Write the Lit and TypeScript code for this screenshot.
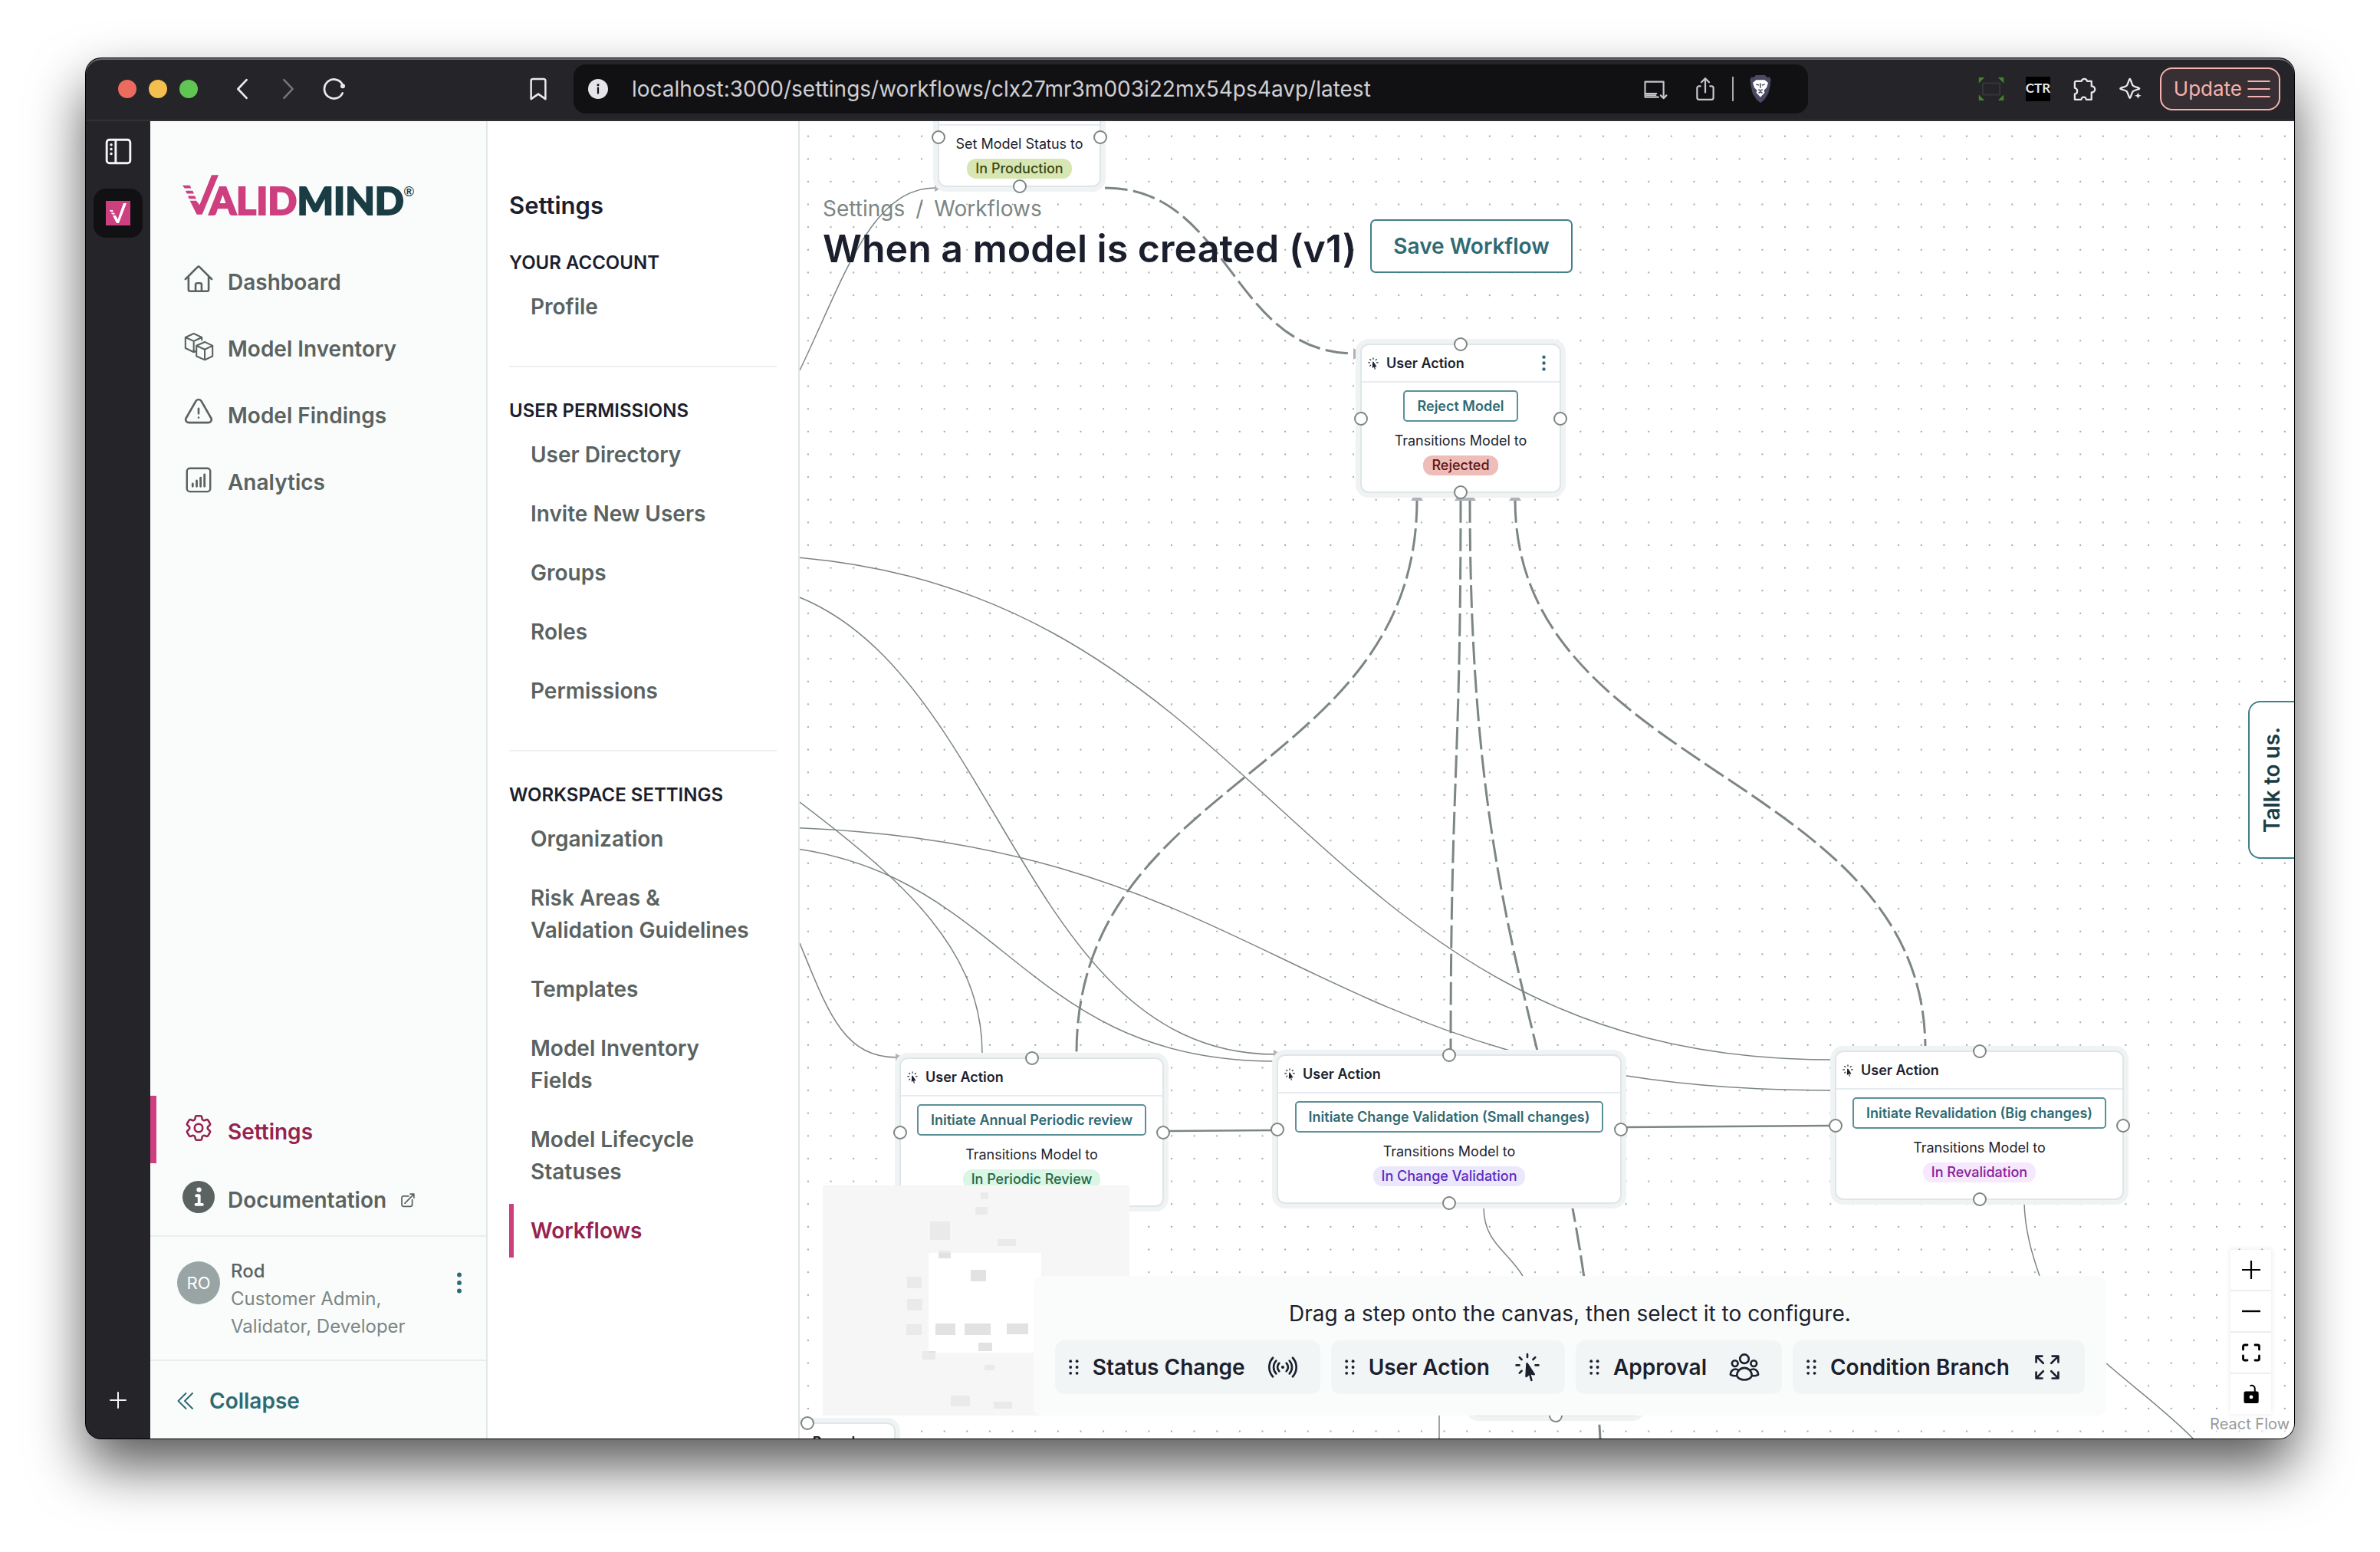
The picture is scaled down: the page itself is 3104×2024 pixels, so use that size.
import { LitElement, html, css, svg, nothing } from "lit";
import { customElement } from "lit/decorators.js";
import { classMap } from "lit/directives/class-map.js";
import { styleMap } from "lit/directives/style-map.js";

interface NavItem { label: string; icon?: unknown; active?: boolean; external?: boolean; }
interface Section { title: string; items: NavItem[]; }
interface FlowNode {
  x: number; y: number; width: number; height?: number;
  title?: string; menu?: boolean; action?: string; caption?: string; status?: string; tone?: string;
  handles: string[];
}

const outline = (d: string) => svg`<path d=${d} fill="none" stroke="currentColor" stroke-width="1.5" stroke-linecap="round" stroke-linejoin="round"></path>`;
const icon = (content: unknown, size = "md") => html`<svg class="icon ${size}" viewBox="0 0 24 24" aria-hidden="true">${content}</svg>`;

const HOME = outline("m2.25 12 8.954-8.955c.44-.439 1.152-.439 1.591 0L21.75 12M4.5 9.75v10.125c0 .621.504 1.125 1.125 1.125H9.75v-4.875c0-.621.504-1.125 1.125-1.125h2.25c.621 0 1.125.504 1.125 1.125V21h4.125c.621 0 1.125-.504 1.125-1.125V9.75M8.25 21h8.25");
const CUBES = svg`<path fill="none" stroke="currentColor" stroke-width="1.2" stroke-linejoin="round" d="M2.200 5.700 8.400 2.900 14.400 5.700 8.400 8.500 2.200 5.700V13.700L8.400 16.700 10 15.900M8.400 8.500V16.700M14.400 5.700V8.100M10.400 11.900 16.600 9.100 22.400 11.900 16.600 14.700 10.400 11.900V19.700L16.600 22.500 22.400 19.700V11.900M16.600 14.700V22.500"></path>`;
const WARNING = outline("M12 9v3.75m-9.303 3.376c-.866 1.5.217 3.374 1.948 3.374h14.71c1.73 0 2.813-1.874 1.948-3.374L13.949 3.378c-.866-1.5-3.032-1.5-3.898 0L2.697 16.126ZM12 15.75h.007v.008H12v-.008Z");
const CHART = svg`<rect x="3.3" y="3.8" width="17.4" height="17.4" rx="2.2" fill="none" stroke="currentColor" stroke-width="1.4"></rect><path fill="none" stroke="currentColor" stroke-width="1.6" stroke-linecap="round" d="M7.6 17.3v-2M10.6 17.3v-4.2M13.5 17.3v-6.4M16.4 17.3V8.5"></path>`;
const GEAR = outline("M9.594 3.94c.09-.542.56-.94 1.11-.94h2.593c.55 0 1.02.398 1.11.94l.213 1.281c.063.374.313.686.645.87.074.04.147.083.22.127.325.196.72.257 1.075.124l1.217-.456a1.125 1.125 0 0 1 1.37.49l1.296 2.247a1.125 1.125 0 0 1-.26 1.431l-1.003.827c-.293.241-.438.613-.43.992a7.723 7.723 0 0 1 0 .255c-.008.378.137.75.43.991l1.004.827c.424.35.534.955.26 1.43l-1.298 2.247a1.125 1.125 0 0 1-1.369.491l-1.217-.456c-.355-.133-.75-.072-1.076.124a6.47 6.47 0 0 1-.22.128c-.331.183-.581.495-.644.869l-.213 1.281c-.09.543-.56.94-1.11.94h-2.594c-.55 0-1.019-.398-1.11-.94l-.213-1.281c-.062-.374-.312-.686-.644-.87a6.52 6.52 0 0 1-.22-.127c-.325-.196-.72-.257-1.076-.124l-1.217.456a1.125 1.125 0 0 1-1.369-.49l-1.297-2.247a1.125 1.125 0 0 1 .26-1.431l1.004-.827c.292-.24.437-.613.43-.991a6.932 6.932 0 0 1 0-.255c.007-.38-.138-.751-.43-.992l-1.004-.827a1.125 1.125 0 0 1-.26-1.43l1.297-2.247a1.125 1.125 0 0 1 1.37-.491l1.216.456c.356.133.751.072 1.076-.124.072-.044.146-.086.22-.128.332-.183.582-.495.644-.869l.214-1.28ZM15 12a3 3 0 1 1-6 0 3 3 0 0 1 6 0Z");
const INFO = svg`<circle cx="12" cy="12" r="12" fill="currentColor"></circle><circle cx="12.3" cy="6.6" r="1.8" fill="#fff"></circle><path fill="none" stroke="#fff" stroke-width="2.2" stroke-linecap="round" stroke-linejoin="round" d="M10.4 11h2v6.6M10 17.6h4.8"></path>`;
const EXTERNAL = svg`<path fill="none" stroke="currentColor" stroke-width="2" stroke-linecap="round" stroke-linejoin="round" d="M13.5 5.5H6A2.5 2.5 0 0 0 3.500 8v10.500A2.500 2.500 0 0 0 6 21h10.500a2.500 2.500 0 0 0 2.500-2.500V11M8 16.500 21.500 2.500M16 2.500h5.500V8"></path>`;
const CHEVRONS = svg`<path fill="none" stroke="currentColor" stroke-width="2" stroke-linecap="round" stroke-linejoin="round" d="M12.500 2 2.500 12l10 10M21 2 11 12l10 10"></path>`;
const KEBAB = svg`<g fill="currentColor"><circle cx="12" cy="3" r="2.500"></circle><circle cx="12" cy="12" r="2.500"></circle><circle cx="12" cy="21" r="2.500"></circle></g>`;
const CURSOR = svg`<path fill="currentColor" d="m13.700 16.600-2.510 2.225.569-9.470 5.227 7.917z"></path><path fill="none" stroke="currentColor" stroke-width="1.500" stroke-linecap="round" stroke-linejoin="round" d="M15.042 21.672 13.684 16.600m0 0-2.510 2.225.569-9.470 5.227 7.917-3.286-.672ZM12 2.250V4.500m5.834.166-1.591 1.591M20.250 10.500H18M7.757 14.743l-1.590 1.590M6 10.500H3.750m4.007-4.243-1.590-1.590"></path>`;
const SIGNAL = svg`<circle cx="12" cy="12" r="1.200" fill="currentColor"></circle><path fill="none" stroke="currentColor" stroke-width="1.500" stroke-linecap="round" d="M9.300 9a4.200 4.200 0 0 0 0 6M14.700 9a4.200 4.200 0 0 1 0 6M7 7.200a7.200 7.200 0 0 0 0 9.600M17 7.200a7.200 7.200 0 0 1 0 9.600M4.600 5a10.400 10.400 0 0 0 0 14M19.400 5a10.400 10.400 0 0 1 0 14"></path>`;
const PEOPLE = svg`<g fill="none" stroke="currentColor" stroke-width="1.500" stroke-linejoin="round" stroke-linecap="round"><circle cx="12" cy="5.800" r="3.300"></circle><circle cx="5" cy="9.200" r="2.200"></circle><circle cx="19" cy="9.200" r="2.200"></circle><path d="M6.400 18.500a5.600 6 0 0 1 11.200 0c-1.200 2.200-3.200 2.900-5.600 2.900s-4.400-.7-5.600-2.900zM6.300 18.300c-1.700.3-3.200 0-4.600-.7-.2-2 1.400-4.200 3.500-4.200 1 0 1.700.2 2.300.7M17.700 18.300c1.700.3 3.200 0 4.600-.7.200-2-1.400-4.200-3.500-4.200-1 0-1.700.2-2.300.7"></path></g>`;
const BRANCH = outline("M3.750 3.750v4.500m0-4.500h4.500m-4.500 0L9 9M3.750 20.250v-4.500m0 4.500h4.500m-4.500 0L9 15M20.250 3.750h-4.500m4.500 0v4.500m0-4.500L15 9m5.250 11.250h-4.500m4.500 0v-4.500m0 4.500L15 15");
const GRIP = svg`<g fill="currentColor"><circle cx="7.200" cy="4.200" r="1.900"></circle><circle cx="15.600" cy="4.200" r="1.900"></circle><circle cx="7.200" cy="12" r="1.900"></circle><circle cx="15.600" cy="12" r="1.900"></circle><circle cx="7.200" cy="19.800" r="1.900"></circle><circle cx="15.600" cy="19.800" r="1.900"></circle></g>`;

const BACK = svg`<path fill="none" stroke="currentColor" stroke-width="2.200" stroke-linecap="round" stroke-linejoin="round" d="M16.500 2.500 7.500 12l9 9.500"></path>`;
const FORWARD = svg`<path fill="none" stroke="currentColor" stroke-width="2" stroke-linecap="round" stroke-linejoin="round" d="M7.500 2.500l9 9.500-9 9.500"></path>`;
const RELOAD = svg`<path fill="none" stroke="currentColor" stroke-width="2.200" stroke-linecap="round" d="M20.600 16.400A10 10 0 1 1 20.600 7.600"></path><circle cx="20.800" cy="9" r="2.400" fill="currentColor"></circle>`;
const BOOKMARK = svg`<path fill="none" stroke="currentColor" stroke-width="2" stroke-linejoin="round" d="M4.500 3.500a2 2 0 0 1 2-2h11a2 2 0 0 1 2 2V22.500L12 17.300 4.500 22.500z"></path>`;
const SITE_INFO = svg`<circle cx="12" cy="12" r="13" fill="#e4e4e9"></circle><circle cx="12" cy="6.800" r="1.500" fill="#111114"></circle><path d="M12 10.600v7" stroke="#111114" stroke-width="2.200" stroke-linecap="round"></path>`;
const INSTALL = svg`<path fill="none" stroke="currentColor" stroke-width="1.700" stroke-linecap="round" stroke-linejoin="round" d="M20.500 13V4.500H1.200v16H15M1.200 16.800H13M20.500 13v8.500M17.500 18.700l3 3 3-3"></path><path d="M2 18.600h11" stroke="currentColor" stroke-width="1.700"></path>`;
const SHARE = svg`<path fill="none" stroke="currentColor" stroke-width="1.800" stroke-linecap="round" stroke-linejoin="round" d="M12 15.500V1.200M8 5l4-4 4 4M7 9H5.500a2 2 0 0 0-2 2v10a2 2 0 0 0 2 2h13a2 2 0 0 0 2-2V11a2 2 0 0 0-2-2H17"></path>`;
const BRAVE = svg`<path fill="#4a4a63" d="M7.300-2.500h9.400l2.400 2.400 2.400-.3 1.500 3.200-1 3 .5 1-2.300 9.700L16.200 23 12 26.500 7.800 23l-4-6.500-2.300-9.700.5-1-1-3L2.500-.4l2.400.3z"></path><path fill="#fff" d="M7.500 2.500h9l3.500 3-1.600 5L15.500 13.500l.9 2.300L12 20.500l-4.400-4.700.9-2.300-2.900-3L4 5.500z"></path><path stroke="#4a4a63" stroke-width="1.200" fill="none" d="M7.500 7.200l3 .9M16.500 7.200l-3 .9M12 6v5M9.800 12.500l2.200 1.300 2.200-1.300M10 16.300 12 15l2 1.300"></path>`;
const SCAN = svg`<path fill="#47812b" d="M-1 0h6L-1 6zM25 0h-6l6 6zM-1 24v-6l6 6zM25 24v-6l-6 6z"></path><rect x="3.200" y="6" width="17.600" height="12" fill="none" stroke="#34343a" stroke-width="1.600"></rect>`;
const PUZZLE = svg`<path fill="none" stroke="currentColor" stroke-width="1.800" stroke-linejoin="round" d="M2.500 3.800h1 5.100a3 3 0 0 1 5.800 0H19v5.400a3.200 3.200 0 0 1 3.600 3A3.200 3.200 0 0 1 19 15.600V23h-5.600a2.500 2.500 0 0 0-5 0H1.500v-5.700a3.200 3.200 0 0 0 0-6.300V4.800z"></path>`;
const SPARKLE = svg`<path fill="none" stroke="currentColor" stroke-width="1.800" stroke-linejoin="round" d="M11 1.500c1 0 1.800 5.600 3.300 7.100C15.800 10.100 21 10.500 21 11.500s-5.200 1.500-6.700 3S12 21.500 11 21.500s-1.800-5.500-3.300-7S1 12.500 1 11.500s5.200-1.400 6.700-2.900S10 1.500 11 1.500z"></path><path fill="currentColor" stroke="#252529" stroke-width="1" d="M19.500 14.500l1.300 3.200 3.200 1.300-3.200 1.300-1.300 3.200-1.300-3.200L15 19l3.200-1.300z"></path>`;
const BARS = svg`<path stroke="currentColor" stroke-width="1.700" stroke-linecap="round" d="M1 4h22M1 12h22M1 20h22"></path>`;
const RAIL_TOGGLE = svg`<rect x="1.500" y="1.500" width="21" height="21" rx="2.500" fill="none" stroke="currentColor" stroke-width="2"></rect><path d="M9.500 2v20" stroke="currentColor" stroke-width="2"></path><g fill="currentColor"><circle cx="5.500" cy="6" r="1.200"></circle><circle cx="5.500" cy="10" r="1.200"></circle><circle cx="5.500" cy="14" r="1.200"></circle></g>`;
const PLUS = svg`<path stroke="currentColor" stroke-width="2" stroke-linecap="round" d="M12 2v20M2 12h20"></path>`;

const ZOOM_IN = svg`<path stroke="currentColor" stroke-width="2.200" d="M12 0v24M0 12h24"></path>`;
const ZOOM_OUT = svg`<path stroke="currentColor" stroke-width="2.400" d="M0 12h24"></path>`;
const FIT = svg`<path fill="none" stroke="currentColor" stroke-width="2.800" stroke-linecap="round" d="M1.500 8V4a2 2 0 0 1 2-2H7M17 2h3.500a2 2 0 0 1 2 2v4M22.500 16v4a2 2 0 0 1-2 2H17M7 22H3.500a2 2 0 0 1-2-2v-4"></path>`;
const LOCK = svg`<path fill="currentColor" fill-rule="evenodd" d="M4.500 8.500h15a2.200 2.200 0 0 1 2.200 2.200V22a2 2 0 0 1-2 2H4.500a2 2 0 0 1-2-2V10.700a2.200 2.200 0 0 1 2-2.200zM12 13.500a2.400 2.400 0 1 0 0 4.800 2.400 2.400 0 0 0 0-4.800z"></path><path fill="none" stroke="currentColor" stroke-width="2" d="M10.500 1.200c4-1.200 6.300.8 6.300 4V9"></path>`;

const MAIN_NAV: NavItem[] = [
  { label: "Dashboard", icon: HOME },
  { label: "Model Inventory", icon: CUBES },
  { label: "Model Findings", icon: WARNING },
  { label: "Analytics", icon: CHART },
];
const FOOT_NAV: NavItem[] = [
  { label: "Settings", icon: GEAR, active: true },
  { label: "Documentation", icon: INFO, external: true },
];
const SECTIONS: Section[] = [
  { title: "YOUR ACCOUNT", items: [{ label: "Profile" }] },
  { title: "USER PERMISSIONS", items: ["User Directory", "Invite New Users", "Groups", "Roles", "Permissions"].map((label) => ({ label })) },
  {
    title: "WORKSPACE SETTINGS",
    items: [
      ...["Organization", "Risk Areas & Validation Guidelines", "Templates", "Model Inventory Fields", "Model Lifecycle Statuses"].map((label) => ({ label })),
      { label: "Workflows", active: true },
    ],
  },
];

/* Nodes and edges share one coordinate space, shifted into view by VIEWPORT. */
const VIEWPORT = { x: -1043, y: -158 };
const SIDES = ["top", "right", "bottom", "left"];
const NODES: FlowNode[] = [
  { x: 1223, y: 113, width: 213, caption: "Set Model Status to", status: "In Production", tone: "lime", handles: SIDES },
  { x: 1774, y: 448, width: 262, title: "User Action", menu: true, action: "Reject Model", caption: "Transitions Model to", status: "Rejected", tone: "red", handles: SIDES },
  { x: 1173, y: 1379, width: 345, title: "User Action", action: "Initiate Annual Periodic review", caption: "Transitions Model to", status: "In Periodic Review", tone: "green", handles: SIDES },
  { x: 1665, y: 1375, width: 450, title: "User Action", action: "Initiate Change Validation (Small changes)", caption: "Transitions Model to", status: "In Change Validation", tone: "violet", handles: SIDES },
  { x: 2393, y: 1370, width: 377, title: "User Action", action: "Initiate Revalidation (Big changes)", caption: "Transitions Model to", status: "In Revalidation", tone: "purple", handles: SIDES },
  { x: 937, y: 1855, width: 231, height: 60, title: "Condition Branch", handles: ["top"] },
  { x: 1917, y: 1717, width: 223, height: 130, handles: ["bottom"] },
];
const SOLID_EDGES = [
  "M1220 245C1135 245 1100 365 1043 483",
  "M946 723C1667 723 1667 1382 2388 1382",
  "M937 759C1300 759 1300 1375 1663 1375",
  "M1043 1046C1180 1150 1281 1240 1281 1374",
  "M956 1078C1672 1078 1672 1422 2388 1422",
  "M957 1101C1310 1101 1310 1384 1663 1384",
  "M1043 1230C1080 1320 1100 1379 1170 1379",
  "M1935 1574C1935 1620 1965 1630 1986 1664",
  "M2640 1569C2641 1605 2650 1635 2660 1664",
  "M2747 1778C2790 1815 2830 1845 2861 1877",
  "M1877 1840V1880",
];
const LINK_EDGES = ["M1525 1475L1658 1474", "M2122 1470L2386 1468"];
const DASHED_EDGES = [
  "M1441 245C1605 245 1605 461 1767 461",
  "M1848 652C1848 1011 1404 1011 1404 1374",
  "M1905 652C1905 1011 1892 1011 1892 1374",
  "M1917 652C1917 1370 2093 1370 2093 2090",
  "M1976 652C1976 1009 2511 1009 2511 1368",
];
const ARROWS = [
  "M1840 653h16l-8-12z", "M1897 653h16l-8-12z", "M1909 653h16l-8-12z", "M1968 653h16l-8-12z",
  "M1765 454v15l12-7z", "M1661 1369v14l12-7z", "M1168 1374v10l10-5z", "M1219 240v10l10-5z",
];

const MAP_NODES = [
  [206, 9, 10, 9], [199, 28, 16, 10], [140, 47, 26, 24], [228, 70, 24, 9], [151, 85, 16, 10], [193, 110, 20, 15],
  [110, 119, 19, 15], [110, 148, 20, 15], [109, 181, 20, 14], [147, 180, 26, 15], [185, 180, 34, 15], [240, 180, 28, 14],
  [203, 205, 18, 11], [130, 216, 17, 11], [211, 234, 13, 7], [167, 274, 25, 14], [223, 282, 24, 9],
];

const STEPS = [
  { label: "Status Change", icon: SIGNAL },
  { label: "User Action", icon: CURSOR },
  { label: "Approval", icon: PEOPLE },
  { label: "Condition Branch", icon: BRANCH },
];

@customElement("app-root")
export class AppRoot extends LitElement {
  static styles = css`
    :host {
      display: block;
      box-sizing: border-box;
      height: 100vh;
      min-height: 1400px;
      padding: 76px 112px 148px;
      background: #fff;
      color: #1c1f2e;
      font-family: Inter, "Liberation Sans", sans-serif;
      font-size: 28px;
      line-height: 42px;
    }
    *, *::before, *::after { box-sizing: border-box; }
    a { color: inherit; text-decoration: none; }
    button { font: inherit; color: inherit; background: none; border: 0; padding: 0; margin: 0; cursor: pointer; }
    h1, h2, h3, p, ul, ol { margin: 0; padding: 0; list-style: none; font: inherit; }
    .icon { display: block; flex: none; overflow: visible; }
    .icon.tiny { width: 18px; height: 18px; }
    .icon.xs { width: 21px; height: 21px; }
    .icon.sm { width: 24px; height: 24px; }
    .icon.ml { width: 28px; height: 28px; }
    .icon.bar { width: 30px; height: 30px; }
    .icon.md { width: 42px; height: 42px; }

    .window {
      position: relative;
      display: flex;
      flex-direction: column;
      height: 100%;
      border-radius: 20px;
      background: #252529;
      box-shadow: 0 0 0 1px #000, 0 36px 72px rgba(0, 0, 0, 0.66);
      overflow: hidden;
    }
    .toolbar {
      display: flex;
      align-items: center;
      flex: none;
      height: 82px;
      padding: 0 18px 1px 42px;
      border-bottom: 2px solid #303035;
      border-radius: 20px 20px 0 0;
      box-shadow: inset 0 2px 0 #6b6c70;
      color: #e9e9ec;
    }
    .lights { display: flex; gap: 16px; margin-right: 43px; }
    .light { width: 24px; height: 24px; border-radius: 50%; }
    .close { background: #ed6a5e; }
    .minimise { background: #f5bf4f; }
    .expand { background: #61c554; }
    .history { display: flex; gap: 30px; margin-right: 236px; }
    .forward { color: #77777d; }
    .address {
      display: flex;
      align-items: center;
      flex: 1;
      min-width: 0;
      height: 64px;
      margin: 0 224px 0 31px;
      padding: 0 47px 0 20px;
      border-radius: 16px;
      background: #111114;
    }
    .url {
      flex: 1;
      min-width: 0;
      margin: 0 20px 0 32px;
      padding: 0;
      border: 0;
      outline: 0;
      background: none;
      color: #cfcfd3;
      font: inherit;
      font-size: 28px;
    }
    .address-actions { display: flex; align-items: center; gap: 35px; color: #c6c6ca; }
    .split { width: 2px; height: 32px; margin: 0 -15px; background: #a9a9ae; }
    .extensions { display: flex; align-items: center; gap: 30px; }
    .ctr { width: 32px; height: 32px; background: #000; color: #e6e6e6; font: 700 17px/29px Lato, sans-serif; text-align: center; }
    .update {
      display: flex;
      align-items: center;
      gap: 7px;
      height: 56px;
      margin-left: -7px;
      padding: 0 11px 0 16px;
      border: 2px solid #f6b2ae;
      border-radius: 16px;
      background: #372f33;
      color: #f6b2ae;
      font-size: 26px;
    }

    .page { display: flex; flex: 1; min-height: 0; }
    .rail { display: flex; flex-direction: column; align-items: center; flex: none; width: 84px; padding: 22px 0 38px; color: #f4f4f6; }
    .rail-toggle .icon { width: 35px; height: 35px; }
    .tab { display: grid; place-items: center; width: 64px; height: 64px; margin-top: 31px; border-radius: 16px; background: #111114; }
    .tab svg { display: block; width: 32px; height: 32px; }
    .new-tab { margin-top: auto; }

    .sidebar { display: flex; flex-direction: column; flex: none; width: 440px; padding-top: 70px; border-right: 2px solid #e3e8e7; background: #fafcfb; color: #5a6361; font-weight: 600; }
    .logo { display: flex; align-items: flex-start; height: 94px; padding-left: 42px; }
    .logo-mark { flex: none; width: 47px; height: 52px; }
    .wordmark { display: flex; margin-left: -12px; padding-top: 8px; color: #cd3f7f; font: 900 50px/50px Lato, "Open Sans", sans-serif; -webkit-text-stroke: 2px currentColor; }
    .wordmark-end { color: #1a3d45; }
    .registered { padding-top: 10px; color: #1a3d45; font: 600 18px/24px "Liberation Sans", sans-serif; }
    .nav-item { display: flex; align-items: center; gap: 17px; height: 87px; padding-left: 34px; border-left: 8px solid transparent; }
    .nav-item > .icon:first-child { margin-bottom: 4px; }
    .nav-label, .nav-label + .icon { margin-top: 5px; }
    .foot { margin-top: auto; }
    .foot .nav-item { height: 91px; }
    .foot .active { height: 88px; border-left-color: #cd3f7f; color: #96224f; }
    .user { display: flex; gap: 14px; align-items: flex-start; height: 162px; margin-top: 3px; padding: 32px 21px 0 35px; border-top: 2px solid #e8edf2; font-size: 24px; line-height: 36px; font-weight: 400; }
    .avatar { display: grid; place-items: center; flex: none; width: 56px; height: 56px; border-radius: 50%; background: #98a5a4; color: #fff; font-size: 22px; }
    .user-text { flex: 1; margin-top: -5px; }
    .user-name { font-weight: 500; }
    .user-roles { color: #7c8684; }
    .user-menu { margin-top: 14px; color: #2f6a73; }
    .collapse { display: flex; align-items: center; gap: 19px; width: 100%; height: 103px; padding: 2px 0 0 34px; border-top: 2px solid #e8ecec; color: #2f6a73; font-weight: 600; }

    .settings { flex: none; width: 405px; padding: 86px 28px 0; background: #fff; }
    .settings-title { margin-bottom: 29px; font-size: 31px; line-height: 48px; font-weight: 600; }
    .section + .section { margin-top: 42px; padding-top: 35px; border-top: 2px solid #edf1f4; }
    .section-title { font-size: 24px; line-height: 44px; font-weight: 600; }
    .links { display: flex; flex-direction: column; gap: 7px; }
    .link { display: block; padding: 14px 22px; border-left: 6px solid transparent; color: #5a6361; font-weight: 600; }
    .link.active { border-left-color: #cd3f7f; color: #96224f; }

    .canvas { position: relative; flex: 1; min-width: 0; overflow: hidden; border-left: 2px solid #dfe5e4; background: #fff; }
    .edges { position: absolute; inset: 0; width: 100%; height: 100%; }
    .solid { fill: none; stroke: #7c8684; stroke-width: 1.500; }
    .linked { fill: none; stroke: #7c8684; stroke-width: 2.500; }
    .dashed { fill: none; stroke: #7c8684; stroke-width: 3; stroke-dasharray: 29.600 7.400; }
    .arrow { fill: #b1b1b7; }
    .nodes { position: absolute; left: 0; top: 0; }
    .node { position: absolute; border: 2px solid #dfe6e7; border-radius: 11px; background: #fff; box-shadow: 0 0 0 6px #eff3f4; font-size: 18px; line-height: 28px; }
    .node-head { display: flex; align-items: center; gap: 8px; height: 49px; padding: 0 10px 0 6px; border-bottom: 2px solid #e6ecf0; font-weight: 600; }
    .node-head.open { border-bottom-color: transparent; }
    .node-title { flex: 1; }
    .node-menu { color: #2f6a73; }
    .node-body { display: flex; flex-direction: column; align-items: center; padding: 10px 0 9px; white-space: nowrap; }
    .node-body.tall { padding-bottom: 21px; }
    .node-action { height: 41px; margin-bottom: 11px; padding: 0 16px; border: 2px solid #5a9098; border-radius: 5px; color: #2f6a73; font-weight: 600; }
    .badge { height: 26px; margin-top: 5px; padding: 0 11px; border-radius: 12px; line-height: 26px; font-weight: 500; }
    .lime { background: #d8e6b4; color: #3b4a12; }
    .red { background: #eebdb8; color: #5c1411; }
    .green { background: #d9f7e4; color: #276749; }
    .violet { background: #ebe7fc; color: #5b2bc0; }
    .purple { background: #f6e8fd; color: #86209b; }
    .handle { position: absolute; width: 18px; height: 18px; margin: -9px; border: 2px solid #7c8684; border-radius: 50%; background: #fff; }
    .handle.top { left: 50%; top: -1px; }
    .handle.bottom { left: 50%; top: calc(100% + 1px); }
    .handle.left { left: -1px; top: 50%; }
    .handle.right { left: calc(100% + 1px); top: 50%; }

    .heading { position: relative; display: flex; flex-direction: column; align-items: flex-start; padding: 93px 30px 0; }
    .crumbs { display: flex; gap: 14px; color: #7c8684; }
    .title-row { display: flex; align-items: center; gap: 18px; margin-top: -8px; }
    .title { margin-top: 7px; font-size: 50px; line-height: 64px; font-weight: 600; color: #1b1f2d; }
    .save { height: 70px; padding: 0 28px; border: 2px solid #42808a; border-radius: 7px; background: #fff; color: #2f6a73; font-weight: 600; }

    .minimap { position: absolute; left: 30px; bottom: 30px; width: 400px; height: 300px; background: #fff; }
    .palette { position: absolute; right: 245px; bottom: 30px; padding: 28px; border-radius: 12px; background: #fafcfb; }
    .palette-hint { margin-bottom: 14px; text-align: center; }
    .steps { display: flex; gap: 14px; }
    .step { display: flex; align-items: center; height: 70px; padding: 0 28px 0 13px; border-radius: 12px; background: #f1f5f6; font-weight: 600; cursor: grab; white-space: nowrap; }
    .step-label { margin: 0 28px 0 12px; }
    .controls { position: absolute; right: 30px; bottom: 30px; display: flex; flex-direction: column; background: #fff; box-shadow: 0 0 5px 2px rgba(0, 0, 0, 0.06); color: #000; }
    .control { display: grid; place-items: center; width: 53px; height: 54px; border-bottom: 2px solid #eee; }
    .attribution { position: absolute; right: 0; bottom: 0; padding: 0 6px; color: #999; background: rgba(255, 255, 255, 0.5); font-size: 20px; line-height: 38px; }
    .talk { position: absolute; right: 0; top: 50%; transform: translateY(-50%) rotate(180deg); width: 60px; height: 206px; border: 2px solid #42808a; border-left: 0; border-radius: 0 16px 16px 0; background: #fff; color: #1a3d45; font-weight: 600; writing-mode: vertical-rl; }
  `;

  private navItem(item: NavItem) {
    return html`<li><a href="#" class=${classMap({ "nav-item": true, active: !!item.active })}>
      ${icon(item.icon)}<span class="nav-label">${item.label}</span>
      ${item.external ? icon(EXTERNAL, "xs") : nothing}
    </a></li>`;
  }

  private node(n: FlowNode) {
    const place: Record<string, string> = { left: `${n.x}px`, top: `${n.y}px`, width: `${n.width}px` };
    if (n.height) place.height = `${n.height}px`;
    return html`<article class="node" style=${styleMap(place)}>
      ${n.title || n.caption ? html`<header class=${classMap({ "node-head": true, open: !n.caption })}>
        ${n.title ? html`${icon(CURSOR, "tiny")}<span class="node-title">${n.title}</span>` : nothing}
        ${n.menu ? html`<button class="node-menu" aria-label="Step options">${icon(KEBAB, "xs")}</button>` : nothing}
      </header>` : nothing}
      ${n.caption ? html`<div class=${classMap({ "node-body": true, tall: !!n.action })}>
        ${n.action ? html`<button class="node-action">${n.action}</button>` : nothing}
        <span>${n.caption}</span>
        <span class="badge ${n.tone ?? ""}">${n.status}</span>
      </div>` : nothing}
      ${n.handles.map((side) => html`<i class="handle ${side}"></i>`)}
    </article>`;
  }

  private toolbar() {
    return html`<header class="toolbar">
      <div class="lights"><i class="light close"></i><i class="light minimise"></i><i class="light expand"></i></div>
      <div class="history">
        <button aria-label="Back">${icon(BACK, "bar")}</button>
        <button class="forward" aria-label="Forward">${icon(FORWARD, "bar")}</button>
        <button aria-label="Reload">${icon(RELOAD, "bar")}</button>
      </div>
      <button aria-label="Bookmark">${icon(BOOKMARK, "bar")}</button>
      <div class="address">
        ${icon(SITE_INFO, "sm")}
        <input class="url" type="text" aria-label="Address" value="localhost:3000/settings/workflows/clx27mr3m003i22mx54ps4avp/latest">
        <div class="address-actions">
          <button aria-label="Install">${icon(INSTALL, "bar")}</button>
          <button aria-label="Share">${icon(SHARE, "bar")}</button>
          <i class="split"></i>
          <button aria-label="Shields">${icon(BRAVE, "bar")}</button>
        </div>
      </div>
      <div class="extensions">
        <button aria-label="Capture">${icon(SCAN, "bar")}</button>
        <span class="ctr">CTR</span>
        <button aria-label="Extensions">${icon(PUZZLE, "bar")}</button>
        <button aria-label="Assistant">${icon(SPARKLE, "bar")}</button>
        <button class="update">Update ${icon(BARS, "bar")}</button>
      </div>
    </header>`;
  }

  private sidebar() {
    return html`<aside class="sidebar">
      <div class="logo">
        <svg class="logo-mark" viewBox="0 0 141 155" aria-hidden="true">
          <path fill="#cd3f7f" d="M114 0h27L77 155H56L29 101h25l13 16zM0 41h29l5 11H8zM12 62h28l5 11H17zM21 82h27l6 11H26z"></path>
        </svg>
        <span class="wordmark">ALID<span class="wordmark-end">MIND</span></span><span class="registered">®</span>
      </div>
      <ul>${MAIN_NAV.map((item) => this.navItem(item))}</ul>
      <div class="foot">
        <ul>${FOOT_NAV.map((item) => this.navItem(item))}</ul>
        <div class="user">
          <span class="avatar">RO</span>
          <div class="user-text">
            <p class="user-name">Rod</p>
            <p class="user-roles">Customer Admin,<br>Validator, Developer</p>
          </div>
          <button class="user-menu" aria-label="Account options">${icon(KEBAB, "ml")}</button>
        </div>
        <button class="collapse">${icon(CHEVRONS, "sm")}Collapse</button>
      </div>
    </aside>`;
  }

  private canvas() {
    const origin = `translate(${VIEWPORT.x} ${VIEWPORT.y})`;
    return html`<main class="canvas">
      <svg class="edges" aria-hidden="true">
        <defs><pattern id="dots" x="-3.900" y="4.900" width="29.630" height="29.630" patternUnits="userSpaceOnUse"><circle cx="14.800" cy="14.800" r="1.100" fill="#9ba2a1"></circle></pattern></defs>
        <rect width="100%" height="100%" fill="url(#dots)"></rect>
        <g transform=${origin}>
          ${SOLID_EDGES.map((d) => svg`<path class="solid" d=${d}></path>`)}
          ${LINK_EDGES.map((d) => svg`<path class="linked" d=${d}></path>`)}
          ${DASHED_EDGES.map((d) => svg`<path class="dashed" d=${d}></path>`)}
          ${ARROWS.map((d) => svg`<path class="arrow" d=${d}></path>`)}
        </g>
      </svg>
      <div class="nodes" style=${styleMap({ transform: `translate(${VIEWPORT.x}px, ${VIEWPORT.y}px)` })}>
        ${NODES.map((n) => this.node(n))}
      </div>
      <div class="heading">
        <ol class="crumbs"><li><a href="#">Settings</a></li><li>/</li><li><a href="#">Workflows</a></li></ol>
        <div class="title-row">
          <h1 class="title">When a model is created (v1)</h1>
          <button class="save">Save Workflow</button>
        </div>
      </div>
      <svg class="minimap" viewBox="0 0 400 300" aria-label="Overview">
        ${MAP_NODES.map(([x, y, w, h]) => svg`<rect x=${x} y=${y} width=${w} height=${h} fill="#e2e2e2"></rect>`)}
        <path fill="#f0f0f0" fill-opacity="0.600" fill-rule="evenodd" d="M0 0h400v300H0zM138 88h147v130H138z"></path>
      </svg>
      <section class="palette">
        <p class="palette-hint">Drag a step onto the canvas, then select it to configure.</p>
        <div class="steps">
          ${STEPS.map((s) => html`<button class="step">${icon(GRIP, "sm")}<span class="step-label">${s.label}</span>${icon(s.icon)}</button>`)}
        </div>
      </section>
      <div class="controls">
        <button class="control" aria-label="Zoom in">${icon(ZOOM_IN, "sm")}</button>
        <button class="control" aria-label="Zoom out">${icon(ZOOM_OUT, "sm")}</button>
        <button class="control" aria-label="Fit view">${icon(FIT, "sm")}</button>
        <button class="control" aria-label="Toggle lock">${icon(LOCK, "sm")}</button>
      </div>
      <a class="attribution" href="#">React Flow</a>
      <button class="talk">Talk to us.</button>
    </main>`;
  }

  render() {
    return html`<div class="window">
      ${this.toolbar()}
      <div class="page">
        <nav class="rail" aria-label="Tabs">
          <button class="rail-toggle" aria-label="Toggle tabs">${icon(RAIL_TOGGLE)}</button>
          <button class="tab" aria-label="Current tab">
            <svg viewBox="0 0 32 32"><rect width="32" height="32" fill="#cd3f7f"></rect><path fill="#fff" d="M23 3h4L17 29h-3L9 19h4l2.500 5zM5 12h4l1 2H6zM7 15.500h4l1 2H8z"></path></svg>
          </button>
          <button class="new-tab" aria-label="New tab">${icon(PLUS, "sm")}</button>
        </nav>
        ${this.sidebar()}
        <nav class="settings" aria-label="Settings">
          <h2 class="settings-title">Settings</h2>
          ${SECTIONS.map((s) => html`<section class="section">
            <h3 class="section-title">${s.title}</h3>
            <ul class="links">${s.items.map((i) => html`<li><a href="#" class=${classMap({ link: true, active: !!i.active })}>${i.label}</a></li>`)}</ul>
          </section>`)}
        </nav>
        ${this.canvas()}
      </div>
    </div>`;
  }
}
